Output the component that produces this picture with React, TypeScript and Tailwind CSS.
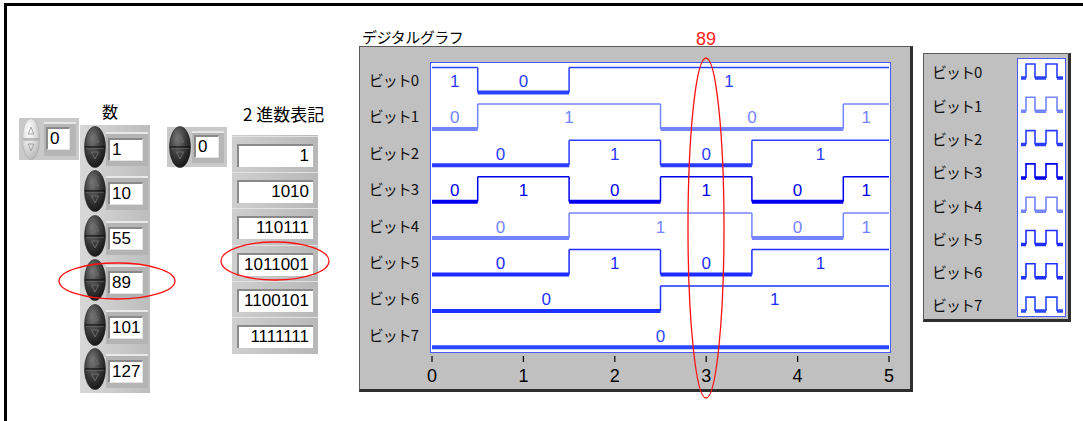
import React from "react";

const VALUES = [1, 10, 55, 89, 101, 127];
const ROW_H = 36.4;
const UNIT = 91.4;
const X = (t: number) => 2 + UNIT * t;

const BIT_COLORS = [
  "#2a40ff", // bit 0
  "#7484ff", // bit 1
  "#2a3cff", // bit 2
  "#0000f0", // bit 3
  "#7484ff", // bit 4
  "#1e2cff", // bit 5
  "#1e30ff", // bit 6
  "#2a48ff", // bit 7
];

const JP = { fontFamily: '"Noto Sans CJK JP", "Noto Sans", sans-serif' };
const NUM = { fontFamily: '"Liberation Sans", Arial, sans-serif' };

interface Segment {
  v: number;
  a: number;
  b: number;
}

function segments(bit: number): Segment[] {
  const segs: Segment[] = [];
  VALUES.forEach((n, i) => {
    const v = (n >> bit) & 1;
    const a = Math.max(0, i - 0.5);
    const b = Math.min(5, i + 0.5);
    const last = segs[segs.length - 1];
    if (last && last.v === v) last.b = b;
    else segs.push({ v, a, b });
  });
  return segs;
}

function Spinner({ dark, className }: { dark?: boolean; className?: string }) {
  const id = dark ? "spinDark" : "spinLight";
  const edge = dark ? "#6a6a6a" : "#9c9c9c";
  return (
    <svg width={dark ? 22 : 18} height="42" viewBox="0 0 22 42" preserveAspectRatio="none" className={className}>
      <defs>
        <radialGradient id={id} cx="38%" cy="30%" r="75%">
          <stop offset="0%" stopColor={dark ? "#7a7a7a" : "#ffffff"} />
          <stop offset="55%" stopColor={dark ? "#3a3a3a" : "#dcdcdc"} />
          <stop offset="100%" stopColor={dark ? "#141414" : "#b4b4b4"} />
        </radialGradient>
      </defs>
      <ellipse cx="11" cy="21" rx="10.5" ry="20.5" fill={`url(#${id})`} stroke={dark ? "#222" : "#a8a8a8"} strokeWidth="0.6" />
      <line x1="1" y1="21" x2="21" y2="21" stroke={dark ? "#0c0c0c" : "#a0a0a0"} strokeWidth="1.2" />
      <line x1="2" y1="22.3" x2="20" y2="22.3" stroke={edge} strokeWidth="0.7" />
      <path d="M11 9 L7.5 16 L14.5 16 Z" fill="none" stroke={edge} strokeWidth="1" />
      <path d="M11 33 L7.5 26 L14.5 26 Z" fill="none" stroke={edge} strokeWidth="1" />
    </svg>
  );
}

function NumBox({ value, width }: { value: number | string; width: string }) {
  return (
    <div
      className={`${width} h-[23px] bg-white border-t-2 border-l-2 border-[#8a8a8a] border-r border-b border-r-[#e4e4e4] border-b-[#e4e4e4] pl-[2px] text-[17px] leading-[20px] text-black`}
      style={NUM}
    >
      {value}
    </div>
  );
}

function DigitalPlot() {
  return (
    <svg width="466" height="330" className="mt-[15px] shrink-0 overflow-visible">
      <rect x="0.5" y="0.5" width="460" height="290" fill="#ffffff" stroke="#4a5aff" strokeWidth="1" />
      {Array.from({ length: 8 }, (_, bit) => {
        const top = bit * ROW_H;
        const hi = top + 5.5;
        const lo = top + 30.5;
        const color = BIT_COLORS[bit];
        const segs = segments(bit);
        return (
          <g key={bit}>
            {segs.map((s, k) => (
              <g key={k}>
                {s.v ? (
                  <line x1={X(s.a)} x2={X(s.b)} y1={hi} y2={hi} stroke={color} strokeWidth="1.5" />
                ) : (
                  <line x1={X(s.a)} x2={X(s.b)} y1={lo} y2={lo} stroke={color} strokeWidth="4" />
                )}
                {k < segs.length - 1 && (
                  <line x1={X(s.b)} x2={X(s.b)} y1={hi} y2={lo} stroke={color} strokeWidth="1.5" />
                )}
                <text
                  x={X((s.a + s.b) / 2)}
                  y={top + 25}
                  textAnchor="middle"
                  fontSize="17"
                  fill={color}
                  style={NUM}
                >
                  {s.v}
                </text>
              </g>
            ))}
          </g>
        );
      })}
      {[0, 1, 2, 3, 4, 5].map((t) => (
        <g key={t}>
          <line x1={X(t)} x2={X(t)} y1="294" y2="300" stroke="#000" strokeWidth="1.2" />
          <text x={X(t)} y="320" textAnchor="middle" fontSize="18" fill="#000" style={NUM}>
            {t}
          </text>
        </g>
      ))}
    </svg>
  );
}

function LegendWaves() {
  return (
    <svg width="47" height="257">
      {Array.from({ length: 8 }, (_, bit) => {
        const c = 13 + bit * 33.3;
        const hi = c - 8;
        const lo = c + 6;
        const color = BIT_COLORS[bit];
        return (
          <g key={bit} stroke={color} fill="none">
            <path d={`M8 ${lo} L8 ${hi} L17 ${hi} L17 ${lo} M28 ${lo} L28 ${hi} L39 ${hi} L39 ${lo}`} strokeWidth="1.6" />
            <path d={`M3 ${lo} L8 ${lo} M17 ${lo} L28 ${lo} M39 ${lo} L45 ${lo}`} strokeWidth="3.5" />
          </g>
        );
      })}
    </svg>
  );
}

export default function App() {
  return (
    <div className="relative w-[1083px] h-[421px] bg-white overflow-hidden pt-[3px] pl-[4px]">
      <div className="h-[418px] border-l-[3px] border-t-[3px] border-black flex items-start">
        {/* small index control */}
        <div className="ml-[12px] mt-[112px] w-[60px] h-[42px] bg-[#c9c9c9] flex items-center shrink-0">
          <Spinner className="ml-[3px]" />
          <div className="ml-[4px] w-[32px] h-[34px] bg-[#b6b6b6] border-t-2 border-[#e6e6e6] pl-[2px] pt-[3px]">
            <NumBox value={0} width="w-[24px]" />
          </div>
        </div>

        {/* 数 array */}
        <div className="ml-[1px] mt-[96px] w-[70px] shrink-0">
          <div className="h-[23px] pl-[22px] text-[16px] leading-[18px] text-black" style={JP}>
            数
          </div>
          <div className="h-[268px] bg-linear-to-r from-[#d8d8d8] to-[#bdbdbd] pt-[1px]">
            {VALUES.map((v) => (
              <div key={v} className="h-[44.4px] flex items-start">
                <Spinner dark className="ml-[4px]" />
                <div className="mt-[6px] w-[42px] h-[34px] bg-[#b4b4b4] border-t-2 border-[#e8e8e8] pl-[2px] pt-[4px]">
                  <NumBox value={v} width="w-[35px]" />
                </div>
              </div>
            ))}
          </div>
        </div>

        {/* index for binary array */}
        <div className="ml-[17px] mt-[121px] w-[60px] h-[40px] bg-[#c9c9c9] flex items-center shrink-0">
          <Spinner dark className="ml-[2px]" />
          <div className="ml-[1px] w-[32px] h-[32px] bg-[#b6b6b6] border-t-2 border-[#e6e6e6] pl-[2px] pt-[2px]">
            <NumBox value={0} width="w-[25px]" />
          </div>
        </div>

        {/* 2進数表記 array */}
        <div className="ml-[5px] mt-[99px] w-[98px] shrink-0">
          <div className="h-[30px] pl-[11px] text-[17px] leading-[18px] whitespace-nowrap text-black" style={JP}>
            2 進数表記
          </div>
          <div className="w-[86px] bg-linear-to-r from-[#cfcfcf] to-[#b8b8b8] pt-[1px] pb-[1px]">
            {VALUES.map((v) => (
              <div key={v} className="h-[36.2px] pt-[7px] px-[5px] border-t border-[#e2e2e2]">
                <div
                  className="h-[23px] bg-white border-t-2 border-l-2 border-[#8a8a8a] text-right pr-[4px] text-[17px] leading-[20px] text-black"
                  style={NUM}
                >
                  {v.toString(2)}
                </div>
              </div>
            ))}
          </div>
        </div>

        {/* デジタルグラフ */}
        <div className="ml-[29px] mt-[22px] shrink-0">
          <div className="h-[18px] pl-[3px] text-[15px] leading-[18px] text-black tracking-[-0.5px]" style={JP}>
            デジタルグラフ
          </div>
          <div className="w-[554px] h-[346px] bg-[#c0c0c0] border-t border-l border-[#5a5a5a] border-r-[3px] border-b-[3px] border-r-[#2e2e2e] border-b-[#2e2e2e] flex">
            <div className="w-[70px] pt-[15px] shrink-0">
              {Array.from({ length: 8 }, (_, i) => (
                <div
                  key={i}
                  className="h-[36.4px] flex items-center justify-end pr-[12px] text-[15px] tracking-[-1px] text-[#111]"
                  style={JP}
                >
                  ビット{i}
                </div>
              ))}
            </div>
            <DigitalPlot />
          </div>
        </div>

        {/* legend */}
        <div className="ml-[10px] mt-[47px] w-[148px] h-[269px] bg-[#c0c0c0] border-t border-l border-[#5a5a5a] border-r-[3px] border-b-[3px] border-r-[#2e2e2e] border-b-[#2e2e2e] flex shrink-0">
          <div className="flex-1 pl-[8px] pt-[2px]">
            {Array.from({ length: 8 }, (_, i) => (
              <div
                key={i}
                className="h-[33.3px] flex items-center text-[15px] tracking-[-1px] text-[#111]"
                style={JP}
              >
                ビット{i}
              </div>
            ))}
          </div>
          <div className="mt-[4px] mr-[2px] w-[49px] h-[259px] bg-white border border-[#4a5aff]">
            <LegendWaves />
          </div>
        </div>
      </div>

      {/* red highlight annotations */}
      <svg className="absolute inset-0 pointer-events-none" width="1083" height="421">
        <ellipse cx="117" cy="281" rx="58" ry="18" fill="none" stroke="#ff1010" strokeWidth="1.3" />
        <ellipse cx="275" cy="261" rx="54" ry="19" fill="none" stroke="#ff1010" strokeWidth="1.3" />
        <ellipse cx="706" cy="228" rx="18" ry="170" fill="none" stroke="#ff1010" strokeWidth="1.3" />
        <text x="706" y="45" textAnchor="middle" fontSize="18" fill="#ff2020" style={NUM}>
          89
        </text>
      </svg>
    </div>
  );
}
